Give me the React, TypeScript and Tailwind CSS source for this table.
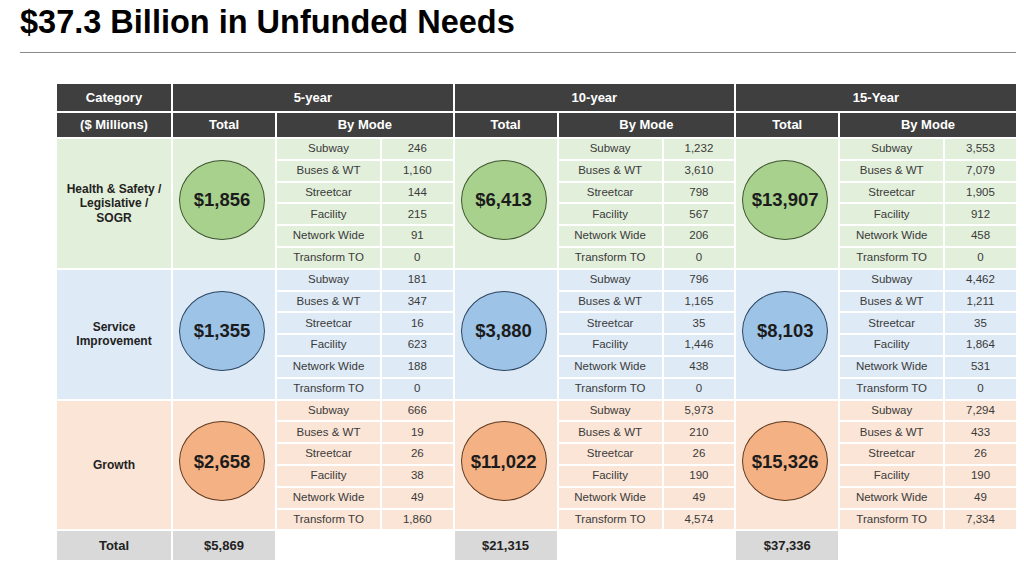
const MODES = ["Subway", "Buses & WT", "Streetcar", "Facility", "Network Wide", "Transform TO"];

type Section = {
  label: string[];
  bg: string;
  circle: string;
  totals: string[];
  values: string[][];
};

const SECTIONS: Section[] = [
  {
    label: ["Health & Safety /", "Legislative /", "SOGR"],
    bg: "bg-[#e2efda]",
    circle: "bg-[#a9d18e] border-[#3e5530]",
    totals: ["$1,856", "$6,413", "$13,907"],
    values: [
      ["246", "1,160", "144", "215", "91", "0"],
      ["1,232", "3,610", "798", "567", "206", "0"],
      ["3,553", "7,079", "1,905", "912", "458", "0"],
    ],
  },
  {
    label: ["Service", "Improvement"],
    bg: "bg-[#deeaf6]",
    circle: "bg-[#9dc3e6] border-[#2c4560]",
    totals: ["$1,355", "$3,880", "$8,103"],
    values: [
      ["181", "347", "16", "623", "188", "0"],
      ["796", "1,165", "35", "1,446", "438", "0"],
      ["4,462", "1,211", "35", "1,864", "531", "0"],
    ],
  },
  {
    label: ["Growth"],
    bg: "bg-[#fbe5d6]",
    circle: "bg-[#f4b183] border-[#5e3a22]",
    totals: ["$2,658", "$11,022", "$15,326"],
    values: [
      ["666", "19", "26", "38", "49", "1,860"],
      ["5,973", "210", "26", "190", "49", "4,574"],
      ["7,294", "433", "26", "190", "49", "7,334"],
    ],
  },
];

const PERIODS = ["5-year", "10-year", "15-Year"];
const GRAND = ["$5,869", "$21,315", "$37,336"];

const head = "flex items-center justify-center bg-[#3f3f3f] text-[13px] font-bold text-white";
const cell = "flex items-center justify-center text-[11.5px] text-[#3a3a3a]";

function SectionCells({ s }: { s: Section }) {
  const cells: React.ReactNode[] = [];
  MODES.forEach((mode, r) => {
    if (r === 0) {
      cells.push(
        <div
          key="cat"
          className={`row-span-6 flex flex-col items-center justify-center text-center text-[12px] font-bold leading-[14.5px] text-[#222] ${s.bg}`}
        >
          {s.label.map((line) => (
            <span key={line}>{line}</span>
          ))}
        </div>,
      );
    }
    PERIODS.forEach((_, p) => {
      if (r === 0) {
        cells.push(
          <div key={`t${p}`} className={`row-span-6 flex items-center justify-center pb-[7px] pr-[4px] ${s.bg}`}>
            <div
              className={`flex h-[80px] w-[86px] items-center justify-center rounded-[50%] border ${s.circle} text-[18.5px] font-bold text-[#1c1c1c]`}
            >
              {s.totals[p]}
            </div>
          </div>,
        );
      }
      cells.push(
        <div key={`n${p}-${r}`} className={`${cell} ${s.bg}`}>
          {mode}
        </div>,
        <div key={`v${p}-${r}`} className={`${cell} ${s.bg}`}>
          {s.values[p][r]}
        </div>,
      );
    });
  });
  return <>{cells}</>;
}

export default function App() {
  return (
    <div className="h-[566px] w-[1024px] overflow-hidden bg-white font-['Liberation_Sans',Arial,sans-serif]">
      <h1 className="pl-[20px] pt-[4px] text-[32.5px] font-bold leading-[36px] text-black">
        $37.3 Billion in Unfunded Needs
      </h1>
      <div className="ml-[20px] mt-[12px] h-px w-[996px] bg-[#8a8a8a]" />

      <div className="ml-[57px] mt-[31px] grid grid-cols-[114px_repeat(3,102px_103px_70.6px)] grid-rows-[27px_24px_repeat(18,19.8px)_29px] gap-[2px]">
        <div className={head}>Category</div>
        {PERIODS.map((p) => (
          <div key={p} className={`${head} col-span-3`}>
            {p}
          </div>
        ))}

        <div className={head}>($ Millions)</div>
        {PERIODS.map((p) => (
          <div key={p} className="contents">
            <div className={head}>Total</div>
            <div className={`${head} col-span-2`}>By Mode</div>
          </div>
        ))}

        {SECTIONS.map((s) => (
          <SectionCells key={s.label.join()} s={s} />
        ))}

        <div className="flex items-center justify-center bg-[#d9d9d9] text-[13px] font-bold text-[#222]">Total</div>
        {GRAND.map((g) => (
          <div key={g} className="contents">
            <div className="flex items-center justify-center bg-[#d9d9d9] text-[13px] font-bold text-[#222]">{g}</div>
            <div className="col-span-2" />
          </div>
        ))}
      </div>
    </div>
  );
}
